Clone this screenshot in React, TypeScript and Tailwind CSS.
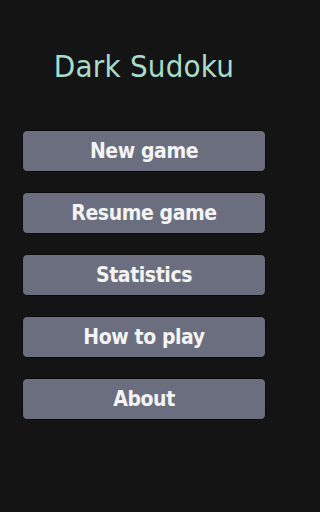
const items = ['New game', 'Resume game', 'Statistics', 'How to play', 'About'];

export default function App() {
  return (
    <div className="min-h-screen bg-[#151414]">
      <div className="w-[288px] h-[512px] flex flex-col items-center font-['DejaVu_Sans_Condensed','DejaVu_Sans',sans-serif]">
        <h1 className="mt-[46px] h-[40px] leading-[40px] text-[31px] text-[#a8dccb] tracking-[0.2px]">
          Dark Sudoku
        </h1>
        <div className="mt-[44px] flex flex-col gap-[20px]">
          {items.map((label) => (
            <button
              key={label}
              className="w-[244px] h-[42px] rounded-[5px] bg-[#6b6e7e] border border-[#0a0a0a] text-[#f4f4f4] text-[21px] font-bold tracking-[-0.4px] leading-none flex items-center justify-center"
            >
              {label}
            </button>
          ))}
        </div>
      </div>
    </div>
  );
}
